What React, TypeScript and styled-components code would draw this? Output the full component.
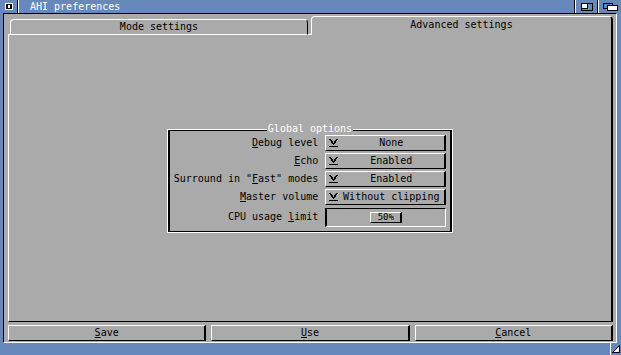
import React from 'react';
import styled, { createGlobalStyle } from 'styled-components';

const GRAY = '#aaaaaa';
const BLUE = '#6688bb';
const WHITE = '#ffffff';
const BLACK = '#000000';

const Global = createGlobalStyle`
  html, body { margin: 0; padding: 0; background: ${BLUE}; }
  body {
    width: 621px; height: 355px; overflow: hidden;
    font-family: "DejaVu Sans Mono", "Liberation Mono", monospace;
    font-size: 10px;
  }
  * { box-sizing: border-box; }
`;

const Window = styled.div`
  width: 621px;
  height: 355px;
  display: flex;
  flex-direction: column;
  background: ${BLUE};
`;

const TitleBar = styled.div`
  height: 13px;
  flex-shrink: 0;
  display: flex;
  align-items: stretch;
`;

const Gadget = styled.div<{ $w: number; $sepLeft?: boolean; $sepRight?: boolean }>`
  width: ${(p) => p.$w}px;
  flex-shrink: 0;
  display: flex;
  align-items: center;
  justify-content: center;
  border-left: ${(p) => (p.$sepLeft ? `1px solid ${WHITE}` : 'none')};
  border-right: ${(p) => (p.$sepRight ? `1px solid ${BLACK}` : 'none')};
`;

const TitleText = styled.div`
  flex: 1;
  border-left: 1px solid ${WHITE};
  border-right: 1px solid ${BLACK};
  padding-left: 11px;
  color: ${WHITE};
  line-height: 13px;
  white-space: pre;
`;

const Middle = styled.div`
  flex: 1;
  display: flex;
  min-height: 0;
`;

const SideBorder = styled.div<{ $w: number }>`
  width: ${(p) => p.$w}px;
  flex-shrink: 0;
`;

const Client = styled.div`
  flex: 1;
  background: ${GRAY};
  border-top: 1px solid ${BLACK};
  border-left: 1px solid ${BLACK};
  border-right: 1px solid ${WHITE};
  border-bottom: 1px solid ${WHITE};
  padding: 2px 3px 1px 4px;
  display: flex;
  flex-direction: column;
`;

const TabBar = styled.div`
  height: 19px;
  flex-shrink: 0;
  display: flex;
  align-items: flex-end;
`;

const TabLine = styled.div<{ $w: number }>`
  width: ${(p) => p.$w}px;
  height: 1px;
  flex-shrink: 0;
  background: ${WHITE};
`;

const InactiveTab = styled.div`
  width: 298px;
  height: 16px;
  flex-shrink: 0;
  border-top: 1px solid ${WHITE};
  border-left: 1px solid ${WHITE};
  border-right: 1px solid ${BLACK};
  border-bottom: 1px solid ${WHITE};
  border-radius: 4px 4px 0 0;
  color: ${BLACK};
  text-align: center;
  line-height: 13px;
`;

const ActiveTab = styled.div`
  flex: 1;
  height: 19px;
  border-top: 1px solid ${WHITE};
  border-left: 1px solid ${WHITE};
  border-right: 2px solid ${BLACK};
  border-radius: 4px 4px 0 0;
  color: ${BLACK};
  text-align: center;
  line-height: 15px;
`;

const Panel = styled.div`
  flex: 1;
  border-left: 1px solid ${WHITE};
  border-right: 2px solid ${BLACK};
  border-bottom: 1px solid ${BLACK};
  display: flex;
  align-items: center;
  justify-content: center;
  padding-top: 5px;
`;

const ButtonRow = styled.div`
  margin-top: 3px;
  height: 16px;
  flex-shrink: 0;
  display: grid;
  grid-template-columns: repeat(3, 1fr);
  column-gap: 5px;
`;

const Raised = styled.div`
  border-top: 1px solid ${WHITE};
  border-left: 1px solid ${WHITE};
  border-bottom: 1px solid ${BLACK};
  border-right: 2px solid ${BLACK};
  color: ${BLACK};
`;

const Button = styled(Raised)`
  height: 16px;
  text-align: center;
  line-height: 14px;
`;

const Key = styled.span`
  text-decoration: underline;
  text-underline-offset: 1px;
`;

const GroupOuter = styled.div`
  position: relative;
  border: 1px solid ${WHITE};
`;

const GroupInner = styled.div`
  border-top: 1px solid ${BLACK};
  border-bottom: 1px solid ${BLACK};
  border-left: 2px solid ${BLACK};
  border-right: 2px solid ${BLACK};
  padding: 4px 4px 4px 4px;
  display: grid;
  grid-template-columns: auto 121px;
  column-gap: 7px;
  row-gap: 2px;
  align-items: center;
`;

const Legend = styled.div`
  position: absolute;
  top: -7px;
  left: 50%;
  transform: translateX(-50%);
  background: ${GRAY};
  color: ${WHITE};
  padding: 0 1px;
  line-height: 12px;
  white-space: pre;
`;

const Label = styled.div`
  text-align: right;
  white-space: pre;
  line-height: 16px;
  color: ${BLACK};
`;

const Cycle = styled(Raised)`
  height: 16px;
  display: flex;
  align-items: center;
  padding-left: 3px;
`;

const CycleText = styled.div`
  flex: 1;
  text-align: center;
  white-space: pre;
  line-height: 14px;
`;

const SliderTrack = styled.div`
  height: 19px;
  margin-top: 1px;
  border-top: 1px solid ${BLACK};
  border-left: 2px solid ${BLACK};
  border-bottom: 1px solid ${WHITE};
  border-right: 1px solid ${WHITE};
  display: flex;
  align-items: center;
  justify-content: center;
`;

const Knob = styled(Raised)`
  width: 32px;
  height: 11px;
  text-align: center;
  line-height: 9px;
  font-size: 9px;
`;

const BottomBar = styled.div`
  height: 12px;
  flex-shrink: 0;
  display: flex;
  justify-content: flex-end;
`;

const SizeGadget = styled.div`
  width: 11px;
  border-left: 1px solid ${WHITE};
  display: flex;
  align-items: center;
  justify-content: center;
`;

const CycleIcon = () => {
  const px: [number, number, number][] = [
    [0, 0, 2], [7, 0, 2],
    [1, 1, 2], [6, 1, 2],
    [2, 2, 2], [5, 2, 2],
    [2, 3, 2], [5, 3, 2],
    [3, 4, 3],
    [4, 5, 1],
    [0, 7, 9],
  ];
  return (
    <svg width="9" height="8" viewBox="0 0 9 8" shapeRendering="crispEdges">
      {px.map(([x, y, w], i) => (
        <rect key={i} x={x} y={y} width={w} height={1} fill={BLACK} />
      ))}
    </svg>
  );
};

const CloseIcon = () => (
  <svg width="8" height="7" viewBox="0 0 8 7" shapeRendering="crispEdges">
    <rect x="0" y="0" width="8" height="7" fill={WHITE} />
    <rect x="1" y="1" width="6" height="5" fill={BLACK} />
    <rect x="3" y="2" width="2" height="3" fill={WHITE} />
  </svg>
);

const ZoomIcon = () => (
  <svg width="12" height="8" viewBox="0 0 12 8" shapeRendering="crispEdges">
    <rect x="0.5" y="0.5" width="11" height="7" fill={BLUE} stroke={BLACK} />
    <rect x="1" y="1" width="5" height="4" fill={WHITE} />
    <rect x="6" y="1" width="1" height="4" fill={BLACK} />
    <rect x="1" y="5" width="6" height="1" fill={BLACK} />
  </svg>
);

const DepthIcon = () => (
  <svg width="15" height="8" viewBox="0 0 15 8" shapeRendering="crispEdges">
    <rect x="0.5" y="0.5" width="9" height="5" fill={BLUE} stroke={BLACK} />
    <rect x="4.5" y="2.5" width="10" height="5" fill={WHITE} stroke={BLACK} />
  </svg>
);

const SizeIcon = () => (
  <svg width="8" height="8" viewBox="0 0 8 8" shapeRendering="crispEdges">
    <polygon points="0.5,7.5 7.5,0.5 7.5,7.5" fill={WHITE} stroke={BLACK} />
  </svg>
);

const rows: { label: React.ReactNode; value: string }[] = [
  { label: <><Key>D</Key>ebug level</>, value: 'None' },
  { label: <><Key>E</Key>cho</>, value: 'Enabled' },
  { label: <>Surround in "<Key>F</Key>ast" modes</>, value: 'Enabled' },
  { label: <><Key>M</Key>aster volume</>, value: 'Without clipping' },
];

export default function App() {
  return (
    <>
      <Global />
      <Window>
        <TitleBar>
          <Gadget $w={18} $sepRight>
            <CloseIcon />
          </Gadget>
          <TitleText>AHI preferences</TitleText>
          <Gadget $w={23} $sepLeft $sepRight>
            <ZoomIcon />
          </Gadget>
          <Gadget $w={23} $sepLeft>
            <DepthIcon />
          </Gadget>
        </TitleBar>
        <Middle>
          <SideBorder $w={3} />
          <Client>
            <TabBar>
              <TabLine $w={2} />
              <InactiveTab>Mode settings</InactiveTab>
              <TabLine $w={3} />
              <ActiveTab>Advanced settings</ActiveTab>
            </TabBar>
            <Panel>
              <GroupOuter>
                <Legend>Global options</Legend>
                <GroupInner>
                  {rows.map((r, i) => (
                    <React.Fragment key={i}>
                      <Label>{r.label}</Label>
                      <Cycle>
                        <CycleIcon />
                        <CycleText>{r.value}</CycleText>
                      </Cycle>
                    </React.Fragment>
                  ))}
                  <Label>
                    CPU usage <Key>l</Key>imit
                  </Label>
                  <SliderTrack>
                    <Knob>50%</Knob>
                  </SliderTrack>
                </GroupInner>
              </GroupOuter>
            </Panel>
            <ButtonRow>
              <Button>
                <Key>S</Key>ave
              </Button>
              <Button>
                <Key>U</Key>se
              </Button>
              <Button>
                <Key>C</Key>ancel
              </Button>
            </ButtonRow>
          </Client>
          <SideBorder $w={4} />
        </Middle>
        <BottomBar>
          <SizeGadget>
            <SizeIcon />
          </SizeGadget>
        </BottomBar>
      </Window>
    </>
  );
}
